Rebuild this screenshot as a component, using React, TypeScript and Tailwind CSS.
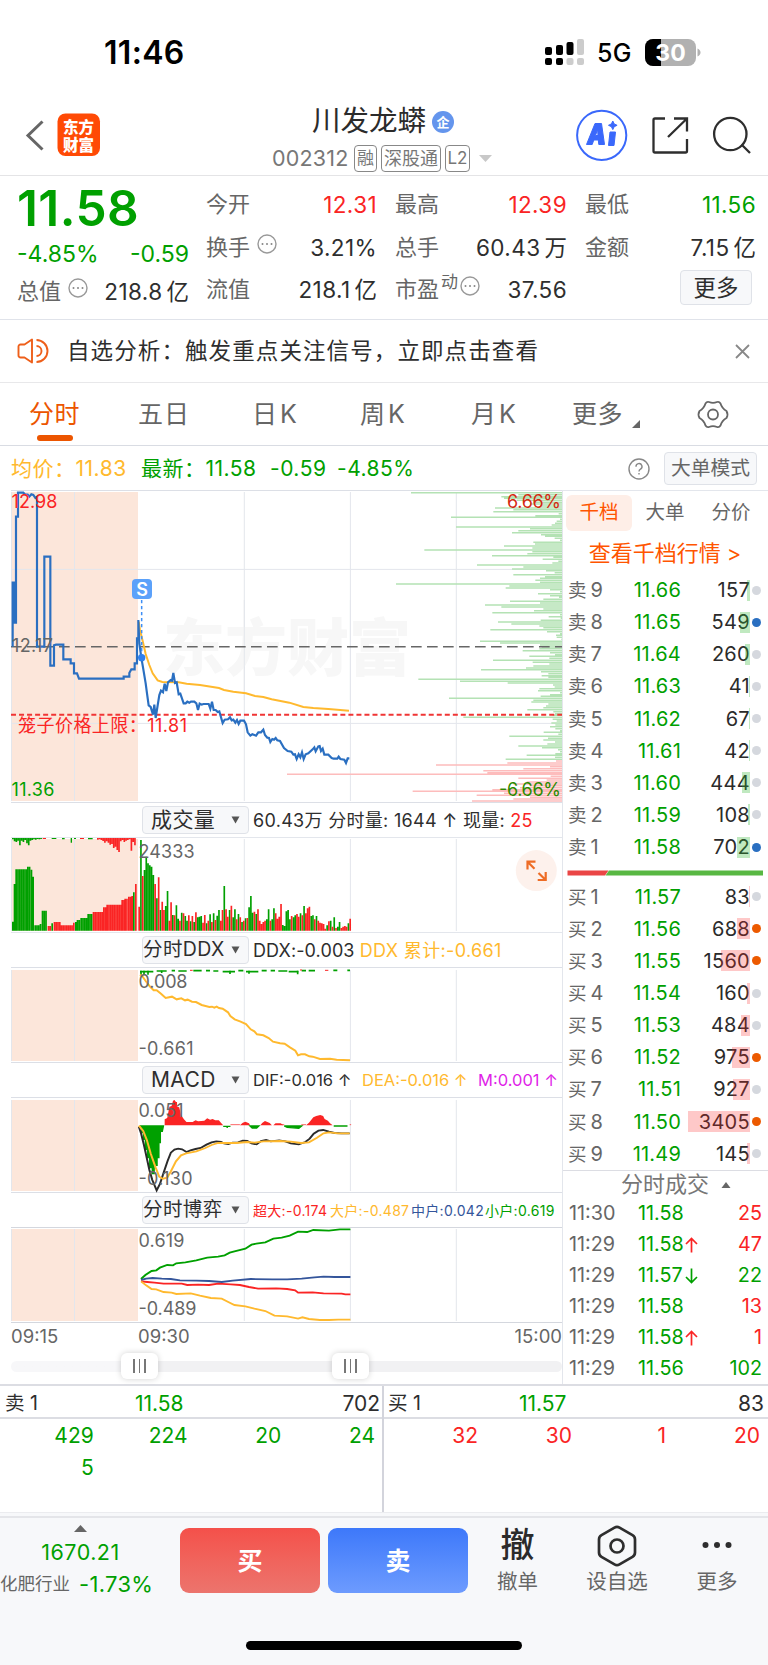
import type { ReactNode } from "react";

const GREEN = "#00a000";
const RED = "#fa2424";
const YELLOW = "#ffb92e";
const BLUE = "#2a6fc1";
const GRID = "#e3e6ec";

const tabs = [
  { label: "五日", width: "w-[114px] tracking-[1px]" },
  { label: "日K", width: "w-[108px] tracking-[3px]" },
  { label: "周K", width: "w-[111px] tracking-[3px]" },
  { label: "月K", width: "w-[101px] tracking-[3px]" },
];

const asks = [
  { name: "9", price: "11.66", qty: 157, bar: 3, dot: "bg-[#d5d8de]" },
  { name: "8", price: "11.65", qty: 549, bar: 10, dot: "bg-[#2a6fc1]" },
  { name: "7", price: "11.64", qty: 260, bar: 5, dot: "bg-[#d5d8de]" },
  { name: "6", price: "11.63", qty: 41, bar: 1, dot: "bg-[#d5d8de]" },
  { name: "5", price: "11.62", qty: 67, bar: 1, dot: "bg-[#d5d8de]" },
  { name: "4", price: "11.61", qty: 42, bar: 1, dot: "bg-[#d5d8de]" },
  { name: "3", price: "11.60", qty: 444, bar: 8, dot: "bg-[#d5d8de]" },
  { name: "2", price: "11.59", qty: 108, bar: 2, dot: "bg-[#d5d8de]" },
  { name: "1", price: "11.58", qty: 702, bar: 13, dot: "bg-[#2a6fc1]" },
];

const bids = [
  { name: "1", price: "11.57", qty: 83, bar: 1, dot: "bg-[#d5d8de]" },
  { name: "2", price: "11.56", qty: 688, bar: 13, dot: "bg-[#ec5a00]" },
  { name: "3", price: "11.55", qty: 1560, bar: 29, dot: "bg-[#ec5a00]" },
  { name: "4", price: "11.54", qty: 160, bar: 3, dot: "bg-[#d5d8de]" },
  { name: "5", price: "11.53", qty: 484, bar: 9, dot: "bg-[#d5d8de]" },
  { name: "6", price: "11.52", qty: 975, bar: 18, dot: "bg-[#ec5a00]" },
  { name: "7", price: "11.51", qty: 927, bar: 17, dot: "bg-[#d5d8de]" },
  { name: "8", price: "11.50", qty: 3405, bar: 62, dot: "bg-[#ec5a00]" },
  { name: "9", price: "11.49", qty: 145, bar: 3, dot: "bg-[#d5d8de]" },
];

const trades = [
  { time: "11:30", price: "11.58", arrow: "", qty: "25", up: true },
  { time: "11:29", price: "11.58", arrow: "up", qty: "47", up: true },
  { time: "11:29", price: "11.57", arrow: "down", qty: "22", up: false },
  { time: "11:29", price: "11.58", arrow: "", qty: "13", up: true },
  { time: "11:29", price: "11.58", arrow: "up", qty: "1", up: true },
  { time: "11:29", price: "11.56", arrow: "", qty: "102", up: false },
];

// order depth, [y, left edge] in thirds of a pixel
const askDepth = [
  [338, 333], [344, 655], [350, 604], [355, 612], [361, 650], [367, 700], [372, 690], [378, 720], [384, 585], [389, 640],
  [395, 580], [401, 776], [407, 706], [412, 453], [418, 780], [424, 770], [430, 765], [435, 755], [441, 468], [446, 690],
  [452, 655], [458, 636], [464, 723], [469, 735], [475, 764], [481, 780], [487, 700], [492, 705], [498, 612], [504, 697],
  [510, 373], [515, 697], [521, 682], [527, 576], [532, 760], [538, 728], [544, 775], [549, 757], [555, 531], [561, 670],
  [567, 636], [572, 738], [578, 764], [584, 640], [590, 735], [595, 720], [601, 706], [607, 720], [612, 288], [618, 628],
  [624, 617], [629, 750], [635, 780], [641, 714], [647, 750], [652, 777], [658, 730], [664, 630], [669, 720], [675, 555],
  [681, 604], [687, 730], [692, 702], [698, 577], [704, 780], [710, 746], [715, 782], [721, 722], [726, 594], [732, 634],
  [738, 718], [743, 730], [749, 571], [755, 741], [761, 780], [766, 768], [772, 770], [778, 784], [784, 540], [789, 600],
  [795, 720], [801, 725], [806, 718], [812, 668], [818, 750], [824, 765], [829, 688], [835, 748], [841, 579], [847, 698],
  [852, 748], [858, 700], [864, 678], [869, 543], [875, 723], [881, 745], [887, 725], [892, 745], [898, 355], [904, 480],
  [909, 623], [915, 759], [921, 764], [926, 718], [932, 714], [938, 780], [944, 750], [949, 722], [955, 447], [961, 700],
  [966, 694], [972, 745], [978, 738], [983, 730], [989, 682], [995, 760], [1001, 765], [1006, 758], [1012, 490], [1018, 758],
  [1023, 770], [1029, 754], [1035, 766], [1040, 750], [1046, 766], [1052, 780], [1057, 731], [1063, 775], [1069, 628], [1075, 744],
  [1080, 730], [1086, 765], [1092, 742], [1098, 655], [1103, 726], [1109, 774], [1115, 780], [1121, 766], [1126, 680], [1132, 765],
  [1138, 617],
];
const bidDepth = [
  [1143, 768], [1149, 622], [1155, 408], [1160, 750], [1166, 670], [1172, 550], [1178, 562], [1183, -39], [1189, 752], [1195, 655],
  [1200, 740], [1206, 680], [1212, 640], [1217, 690], [1223, 660], [1229, 577], [1234, 338], [1240, 612], [1246, 530], [1252, 690],
  [1257, 640], [1263, 516],
];

// volume bars, [top, is up], one for each minute from the open
const volume: [number, number][] = [
  [320, 1], [120, 0], [228, 1], [210, 0], [170, 0], [190, 0], [196, 0], [200, 0], [225, 0], [252, 1],
  [295, 0], [232, 1], [330, 0], [305, 1], [330, 1], [318, 0], [273, 0], [362, 1], [307, 1], [345, 0],
  [346, 1], [316, 0], [356, 0], [362, 1], [338, 0], [340, 1], [348, 0], [362, 0], [346, 1], [364, 0],
  [348, 1], [366, 0], [337, 1], [352, 0], [350, 0], [348, 0], [368, 1], [345, 1], [370, 0], [362, 1],
  [343, 0], [366, 1], [340, 0], [360, 1], [347, 0], [330, 0], [362, 1], [330, 1], [258, 0], [328, 1],
  [350, 1], [330, 0], [317, 1], [352, 0], [328, 0], [358, 1], [342, 0], [352, 1], [366, 0], [362, 1],
  [355, 0], [354, 1], [322, 0], [288, 0], [338, 0], [335, 1], [342, 0], [328, 1], [362, 1], [372, 1],
  [366, 1], [362, 1], [358, 0], [328, 0], [362, 1], [358, 0], [325, 0], [340, 1], [356, 1], [350, 1],
  [312, 1], [375, 0], [378, 0], [334, 0], [330, 0], [358, 0], [348, 1], [352, 0], [346, 0], [342, 1],
  [350, 1], [340, 0], [346, 1], [318, 0], [340, 1], [325, 1], [320, 1], [348, 0], [346, 0], [358, 1],
  [348, 0], [362, 1], [368, 1], [370, 1], [372, 1], [386, 1], [376, 0], [364, 1], [362, 0], [380, 1],
  [352, 0], [384, 1], [380, 0], [366, 0], [384, 1], [380, 1], [378, 1], [380, 1], [370, 0], [356, 1],
];

// auction bars, [first x, last x, top, is up]
const auction = [
  [36, 36, 365, 0], [41, 41, 252, 0], [46, 79, 208, 0], [81, 88, 200, 0], [92, 92, 209, 0], [97, 97, 230, 0],
  [103, 114, 376, 0], [119, 119, 372, 0], [125, 138, 332, 0], [143, 150, 378, 1], [154, 156, 370, 0], [161, 178, 366, 1],
  [182, 214, 376, 1], [219, 219, 368, 1], [225, 225, 366, 0], [230, 236, 360, 0], [241, 258, 354, 0], [262, 274, 342, 0],
  [278, 304, 336, 1], [309, 314, 322, 1], [319, 360, 314, 1], [364, 368, 300, 1], [373, 379, 296, 1], [384, 390, 290, 1],
  [394, 394, 288, 1], [399, 399, 277, 0], [405, 405, 252, 1],
];
const unmatchedGreen = [4, 10, 12, 8, 22, 8, 12, 6, 16, 22, 8, 6, 4, 5, 3, 4, 3];
const unmatchedRed = [5, 4, 6, 9, 14, 10, 14, 20, 18, 30, 26, 36, 42, 10, 6, 12, 8, 6, 4, 38, 12, 22];

const bars = (list: { x: number; y: number; h: number; w?: number }[]) =>
  list.map(({ x, y, h, w = 5 }) => `M${x} ${y}h${w}v${h}h-${w}z`).join("");

const auctionPath = (up: number) =>
  auction
    .filter((a) => a[3] === up)
    .map(([from, to, top], i, all) => {
      const list = [];
      const end = all[i][1] > from ? to + 2 : to;
      for (let x = from; x <= end; x += 5.3) list.push({ x, y: top, h: 392 - top });
      return bars(list);
    })
    .join("");

const volumePath = (up: number) =>
  bars(
    volume
      .map(([top, isUp], i) => ({ x: 415 + i * 5.32, y: top, h: 392 - top, isUp }))
      .filter((b) => b.isUp === up),
  );

function Frame({ y, height, children }: { y: number; height: number; children: ReactNode }) {
  return (
    <svg
      className="block shrink-0 font-[Inter]"
      width={552}
      height={height}
      viewBox={`11 ${y} 552 ${height}`}
    >
      {children}
    </svg>
  );
}

function Grid({ top, bottom }: { top: number; bottom: number }) {
  return (
    <>
      <rect x={11.5} y={top} width={126.5} height={bottom - top} fill="#fce6da" />
      <path
        d={`M11.5 ${top}V${bottom}M74.5 ${top}V${bottom}M244.3 ${top}V${bottom}M350.4 ${top}V${bottom}M456.3 ${top}V${bottom}`}
        stroke={GRID}
        fill="none"
      />
    </>
  );
}

function PriceChart() {
  const depth = (rows: number[][]) =>
    rows.map(([y, x]) => `M${x + 900} ${y}H1688`).join("");
  return (
    <Frame y={490} height={313}>
      <path d="M11 490.5H562M11 802.5H562" stroke="#dcdfe6" />
      <Grid top={492} bottom={801} />
      <path d="M11 569.4H562M11 723.4H562" stroke={GRID} />
      <text
        x={163}
        y={671}
        fontSize={62}
        fontWeight={900}
        fill="#f7f7f7"
        textLength={248}
        fontFamily="Noto Sans CJK SC"
      >
        东方财富
      </text>
      <path d="M244.3 600V700M350.4 600V700" stroke={GRID} />
      <g transform="translate(0 380) scale(.33333)" fill="none">
        <path d={depth(askDepth)} stroke="#b4e2b4" strokeWidth={4.3} />
        <path d={depth(bidDepth)} stroke="#fdbcbc" strokeWidth={4.3} />
        <path d="M33 800H1688" stroke="#666" strokeWidth={4.5} strokeDasharray="32 16" />
        <path d="M33 1004.5H1688" stroke="#f03535" strokeWidth={6} strokeDasharray="15 9.1" />
        <path
          d="M416 725L420 750L428 783L437 822L448 855L458 880L473 901L487 906L536 907L560 911L600 915L657 924L672 930L700 935L738 940L765 948L790 951L815 958L868 968L910 981L940 984L985 987L1047 992"
          stroke={YELLOW}
          strokeWidth={6}
        />
        <path
          d="M38 800V608H44V728H48V410H54V338H70L76 344H83L88 350L94 343L100 345L106 354L111 350V800H133V530H151V857H162V796L168 794H190V838H212V850H222V880H231L237 896H371V890H388V879L394 868H404V850H411V775H415V720L418 790L424 833L430 868L437 910L441 940L446 976L452 981L459 1004L463 974L467 1014L473 976L478 945L483 932L489 937L494 911L499 933L504 907L512 900L516 902L520 879L525 909L530 907L536 943L541 941L551 970L557 970L562 965L568 968L573 965H583L589 970L594 990L599 971L605 974L610 972H626L631 986L636 965L641 990L647 990L653 996L658 994L668 1029L674 1019L684 1018L690 1012L695 1021L700 1019L706 1028L711 1020L716 1032L721 1022H732L738 1033L743 1057L751 1067L757 1063L768 1067L775 1057L783 1057L790 1049L795 1065L802 1073L807 1074L811 1086L817 1077L822 1079L827 1074L832 1081L840 1083L852 1104L863 1113L874 1115L880 1124L885 1123L890 1137L896 1123L901 1132L906 1117L911 1137L917 1123L925 1120L938 1108L943 1102L947 1114L955 1099L959 1098L963 1113L968 1106L973 1124H985L995 1134L1001 1136H1012L1016 1130L1021 1137L1033 1139L1038 1149L1043 1135H1048"
          stroke={BLUE}
          strokeWidth={6.5}
        />
        <path d="M425 660V825" stroke="#3d8ef5" strokeWidth={4.5} strokeDasharray="10 8" />
        <circle cx={425} cy={833} r={11} fill="#2f80ed" />
      </g>
      <rect x={132} y={579} width={20} height={20} rx={4} fill="#5ba1fa" />
      <g fontSize={18}>
        <text x={142} y={595.5} fill="#fff" fontWeight={600} textAnchor="middle">S</text>
        <text x={11.5} y={508} fill={RED} textLength={46}>12.98</text>
        <text x={12} y={652} fill="#666" textLength={41}>12.17</text>
        <text x={11.5} y={796} fill={GREEN} textLength={43}>11.36</text>
        <text x={507} y={508} fill="#d42a12" textLength={54}>6.66%</text>
        <text x={499} y={796} fill="#2b8a00" textLength={62}>-6.66%</text>
        <text x={18} y={732} fill={RED} textLength={169} fontFamily="Inter, Noto Sans CJK SC">
          笼子价格上限：11.81
        </text>
      </g>
      <path d="M562.5 490V803" stroke="#e3e6ec" />
    </Frame>
  );
}

function VolumeChart() {
  return (
    <Frame y={837} height={96}>
      <path d="M11 837.5H562M11 932.5H562" stroke={GRID} />
      <Grid top={839} bottom={931} />
      <g transform="translate(0 800) scale(.33333)">
        <path d={auctionPath(0) + volumePath(0)} fill={GREEN} />
        <path d={auctionPath(1) + volumePath(1)} fill={RED} />
        <path d={bars(unmatchedGreen.map((h, i) => ({ x: 36 + i * 5.3, y: 114, h })))} fill={GREEN} />
        <path d={bars(unmatchedRed.map((h, i) => ({ x: 291 + i * 5.3, y: 114, h })))} fill={RED} />
        <path d="M155 114h14v3h-14zM186 114h8v4h-8zM212 114h4v14h-4zM222 114h6v3h-6zM264 114h14v4h-14z" fill={GREEN} />
        <path d="M128 114h10v3h-10zM240 114h12v3h-12z" fill={RED} />
      </g>
      <text x={138.5} y={857.5} fontSize={18} fill="#666" textLength={56}>24333</text>
      <circle cx={536.3} cy={870.6} r={20.5} fill="#fdf1ec" />
      <path
        d="M527.5 869.5V861.7H535.5M527.5 861.7L534.5 868.7M537.7 880H545.7V872M545.7 880L538.5 873"
        stroke="#ee6c25"
        strokeWidth={2.2}
        fill="none"
      />
      <path d="M562.5 837V933" stroke="#e3e6ec" />
    </Frame>
  );
}

function DdxChart() {
  return (
    <Frame y={967} height={96}>
      <path d="M11 967.5H562M11 1062.5H562" stroke="#dcdfe6" />
      <Grid top={970} bottom={1061} />
      <g transform="translate(0 800) scale(.33333)" fill="none">
        <path
          d="M420 515H460M470 513H500M515 512H525M535 513H560M580 512H605M618 512H630M640 513H655M668 515H705M715 512H730M738 515H775M785 512H800M812 512H825M835 513H862M866 515H895M905 512H918M926 512H945M1000 511H1012M1042 511H1050"
          stroke={GREEN}
          strokeWidth={5}
        />
        <path d="M423 512V526M432 512V524M444 512V524M485 512V519M690 512V522M747 512V521M893 512V523" stroke={GREEN} strokeWidth={5} />
        <path d="M570 511H578M900 510H906M975 511H985" stroke={RED} strokeWidth={3} />
        <path
          d="M420 524L428 530L437 543L450 560L461 571L470 571L483 581L497 594L516 590L530 598L544 595L555 601L563 599L576 605L588 606L605 615L628 621L636 620L643 623L650 620L657 624L668 626L684 637L691 648L704 658L720 664L738 672L752 688L763 694L771 703L790 706L806 714L819 725L840 730L854 731L870 742L886 752L894 766L903 763L915 763L928 769L938 770L960 777L990 776L1010 779L1050 781"
          stroke={YELLOW}
          strokeWidth={6}
        />
      </g>
      <g fontSize={18} fill="#666">
        <text x={138.5} y={987.5} textLength={49}>0.008</text>
        <text x={138.5} y={1055} textLength={55}>-0.661</text>
      </g>
      <path d="M562.5 967V1063" stroke="#e3e6ec" />
    </Frame>
  );
}

function MacdChart() {
  return (
    <Frame y={1097} height={96}>
      <path d="M11 1097.5H562M11 1192.5H562" stroke="#dcdfe6" />
      <Grid top={1100} bottom={1191} />
      <g transform="translate(0 1080) scale(.3635 .33333)">
        <path
          d="M384 136L452 136L448 156H443V190H439V235H434V258H426V283H417V265H410V235H404V210H398V180H393V160H388V145Z"
          fill={GREEN}
        />
        <path
          d="M453 136V118L460 114L466 80L472 78L476 62L480 60L484 66H487V80L493 82L498 105L506 118L513 126H530L538 121L545 124L562 122L570 115L578 119L585 117L592 121H602L609 130L614 136ZM660 136L668 128L675 125L685 130L688 136ZM716 136L722 128L729 123L742 129L748 136ZM752 136L758 130H772L780 136ZM842 136L850 128L856 120L862 112L870 108L881 105L889 108L893 117L902 122L908 130L915 136Z"
          fill={RED}
        />
        <path d="M614 139H634M625 141V144M688 138L694 144H706L712 138ZM782 138L790 142L822 145L830 138ZM918 138H956" stroke={GREEN} strokeWidth={4} fill={GREEN} />
        <path d="M634 134H660M775 134H782M829 134H842M962 134H966" stroke={RED} strokeWidth={2} />
        <g fill="none" strokeWidth={5.5}>
          <path
            d="M382 140L388 160L396 195L404 235L411 270L419 300L431 331L440 312L451 275L461 243L470 218L480 209L490 206L501 208L513 216L524 211L538 207L552 204L568 194L582 187L595 184L608 186L616 190L628 192L640 188L655 187L668 182L680 183L692 190L706 193L718 183L732 180L745 184L768 181L785 184L800 190L822 193L840 186L852 176L863 161L876 152L889 150L905 155L920 159L940 160H962"
            stroke="#2b2b2b"
          />
          <path
            d="M382 137L394 153L404 180L415 222L428 262L438 290L448 296L460 293L470 274L484 244L498 226L512 220L540 214L565 204L582 195L600 189L625 189L650 189L680 186L700 188L725 184L770 183L800 185L828 189L850 187L872 173L890 160L905 157L930 160L962 160"
            stroke={YELLOW}
          />
        </g>
      </g>
      <g fontSize={18} fill="#666">
        <text x={138.5} y={1117} textLength={45}>0.051</text>
        <text x={138.5} y={1185} textLength={54}>-0.130</text>
      </g>
      <path d="M562.5 1097V1193" stroke="#e3e6ec" />
    </Frame>
  );
}

function GameChart() {
  return (
    <Frame y={1227} height={96}>
      <path d="M11 1227.5H562M11 1322.5H562" stroke="#d4d7de" />
      <Grid top={1229} bottom={1321} />
      <g transform="translate(0 1080) scale(.3635 .33333)" fill="none" strokeWidth={5.5}>
        <path
          d="M388 597L400 585L417 573L430 571L440 563L460 555L476 556L485 550L510 547L540 541L570 533L600 530L618 526L632 518L645 514L675 506L692 494L705 491L730 487L752 476L775 473L797 467L820 455L845 456L862 450L905 452L935 448H964"
          stroke={GREEN}
        />
        <path d="M388 600L402 596L420 594L445 596L470 597L495 601L540 602L575 603L610 606L640 602L690 597L750 598L790 598L830 596L865 592L890 590L920 591H964" stroke="#34559b" />
        <path d="M388 604L405 606L425 608L450 611L500 611L515 615L545 614L575 615L600 611L635 613L660 615L685 621L710 626L760 625L790 627L812 631L820 638L860 637L890 640L940 641L950 643L964 643" stroke={RED} />
        <path d="M388 604L402 616L417 627L430 628L450 636L472 638L485 642L525 640L550 647L580 654L610 656L628 666L645 675L675 679L700 686L730 693L755 707L790 709L820 716L832 712L850 717L880 720H905L930 719H964" stroke={YELLOW} />
      </g>
      <g fontSize={18} fill="#666">
        <text x={138.5} y={1247} textLength={46}>0.619</text>
        <text x={138.5} y={1315} textLength={58}>-0.489</text>
      </g>
      <path d="M562.5 1227V1323" stroke="#e3e6ec" />
    </Frame>
  );
}

function Picker({ label, children, wide }: { label: string; children: ReactNode; wide?: boolean }) {
  return (
    <div className="flex h-[34px] w-[552px] shrink-0 items-center border-r border-[#e3e6ec] pl-[131px] whitespace-nowrap">
      <div className="flex h-[28px] w-[107px] shrink-0 items-center rounded border border-[#dfe2e8] bg-[#f7f8fa] text-[#2e2e2e]">
        <span className={wide ? "w-[88px] pl-[8px] text-[21px] tracking-[0.4px]" : "w-[88px] text-[19.5px] tracking-[0.4px]"}>
          {label}
        </span>
        <svg width={9} height={8} viewBox="0 0 9 8" className="block">
          <path d="M.5 .5h8L4.5 7.5z" fill="#555" />
        </svg>
      </div>
      <div className="ml-1 flex flex-1 text-[#2e2e2e]">{children}</div>
    </div>
  );
}

function More() {
  return (
    <svg width={20} height={20} viewBox="0 0 20 20" className="block shrink-0">
      <circle cx={10} cy={10} r={9} fill="none" stroke="#999" strokeWidth={1.4} />
      <path d="M5.5 10h.01M10 10h.01M14.5 10h.01" stroke="#888" strokeWidth={2} strokeLinecap="round" />
    </svg>
  );
}

function Cell({
  label,
  extra,
  value,
  unit,
  color = "text-[#2e2e2e]",
}: {
  label: string;
  extra?: ReactNode;
  value: string;
  unit?: string;
  color?: string;
}) {
  return (
    <div className="flex h-[43px] items-center justify-between">
      <span className="flex items-center text-[22px] text-[#666]">
        {label}
        {extra}
      </span>
      <span className={`${color} text-[22.5px] tracking-[0.4px]`}>
        {value}
        {unit && <span className="ml-[4px] tracking-normal">{unit}</span>}
      </span>
    </div>
  );
}

function BookRow({ side, row }: { side: string; row: (typeof asks)[number] }) {
  const sell = side === "卖";
  return (
    <div className="flex h-[32.13px] items-center pl-[5px] text-[20px]">
      <span className="w-[49px] text-[#666]">
        <span className="mr-[4px] text-[18.5px]">{side}</span>
        {row.name}
      </span>
      <span className="w-[64px] text-right tracking-[0.2px] text-[#00a000]">{row.price}</span>
      <span className="relative flex h-[21px] w-[69px] items-center justify-end tracking-[0.3px] text-[#2b2b2b]">
        {row.qty}
        <i
          className={sell ? "absolute top-0 right-0 h-full bg-[#2fb52f]/30" : "absolute top-0 right-0 h-full bg-[#fa2424]/25"}
          style={{ width: row.bar }}
        />
      </span>
      <i className={`ml-[2px] h-[9px] w-[9px] rounded-full ${row.dot}`} />
    </div>
  );
}

function Handle({ className }: { className: string }) {
  return (
    <div className={`absolute top-[8px] flex h-[26px] w-[37px] items-center justify-center gap-[4px] rounded-md bg-white shadow-[0_0_6px_rgba(0,0,0,0.18)] ${className}`}>
      <i className="h-[14px] w-[1.5px] bg-[#777]" />
      <i className="h-[14px] w-[1.5px] bg-[#777]" />
      <i className="h-[14px] w-[1.5px] bg-[#777]" />
    </div>
  );
}

function StatusBar() {
  return (
    <div className="flex h-[104px] items-center pl-[104px]">
      <span className="w-[440px] pt-[2px] text-[32px] font-semibold tracking-[0.3px] text-black">11:46</span>
      <svg width={41} height={28} viewBox="0 0 41 28">
        <g fill="#000">
          <rect x={1} y={9} width={7} height={8} rx={2} />
          <rect x={12} y={7} width={7} height={10} rx={2} />
          <rect x={22.5} y={4} width={7} height={13} rx={2} />
          <rect x={1} y={20} width={7} height={7} rx={2} />
          <rect x={12} y={20} width={7} height={7} rx={2} />
        </g>
        <g fill="#ccc">
          <rect x={33} y={1} width={7} height={16} rx={2} />
          <rect x={22.5} y={20} width={7} height={7} rx={2} />
          <rect x={33} y={20} width={7} height={7} rx={2} />
        </g>
      </svg>
      <span className="ml-[12px] w-[48px] pt-[4px] text-[25px] font-medium tracking-[0.2px] text-black">5G</span>
      <svg width={56} height={27} viewBox="0 0 56 27" className="font-[Inter]">
        <rect x={0} y={0} width={51} height={27} rx={8} fill="#b1b1b1" />
        <path d="M16 0H8a8 8 0 0 0-8 8v11a8 8 0 0 0 8 8h8z" fill="#000" />
        <path d="M52.5 9.5c4 1.5 4 6.5 0 8z" fill="#b1b1b1" />
        <text x={25.5} y={22} fill="#fff" fontSize={23} fontWeight={700} textAnchor="middle">30</text>
      </svg>
    </div>
  );
}

function Header() {
  return (
    <div className="flex h-[72px] border-b border-[#e4e4e6]">
      <svg width={102} height={60} viewBox="0 104 102 60">
        <path d="M42.5 121.5L28 135.5L42.5 149.5" stroke="#666" strokeWidth={3} fill="none" />
        <rect x={57.5} y={113.5} width={42.5} height={42.5} rx={8} fill="#ff4a05" />
        <g fill="#fff" fontSize={15.5} fontWeight={900} fontFamily="Noto Sans CJK SC">
          <text x={63} y={132.5}>东方</text>
          <text x={63} y={150.5}>财富</text>
        </g>
      </svg>
      <div className="w-[474px]">
        <div className="mt-[2px] flex h-[31px] items-center pl-[210px]">
          <span className="text-[28.5px] text-[#2b2b2b]">川发龙蟒</span>
          <svg width={22} height={22} viewBox="0 0 22 22" className="ml-[6px] font-bold">
            <circle cx={11} cy={11} r={11} fill="#6495ed" />
            <text x={11} y={15.5} fill="#fff" fontSize={13} textAnchor="middle">企</text>
          </svg>
        </div>
        <div className="mt-[8px] flex h-[27px] items-center gap-[4px] pl-[170px] text-[#777]">
          <span className="mr-[4px] w-[74px] text-[21.5px] tracking-[0.2px]">002312</span>
          <span className="h-[27px] w-[23px] rounded border border-[#888] text-center text-[17px] leading-[25px]">融</span>
          <span className="h-[27px] w-[60px] rounded border border-[#888] text-center text-[18px] leading-[25px]">深股通</span>
          <span className="h-[27px] w-[25px] rounded border border-[#888] text-center text-[17px] leading-[25px]">L2</span>
          <svg width={13} height={7} viewBox="0 0 13 7" className="ml-[5px]">
            <path d="M0 0h13L6.5 7z" fill="#c8c8c8" />
          </svg>
        </div>
      </div>
      <svg width={192} height={62} viewBox="576 104 192 62" fill="none">
        <circle cx={601.7} cy={135.3} r={24.6} stroke="#3a68fb" strokeWidth={2} />
        <path d="M586.5 144.5L595 123.5H601.5L604.5 144.5H598.8L598.3 140H593.8L592.2 144.5Z M595.5 135.5H598L597.6 129.5Z" fill="#3a68fb" stroke="#3a68fb" strokeLinejoin="round" fillRule="evenodd" />
        <path d="M610 132H615.5L614 145.500H608.500Z" fill="#3a68fb" stroke="#3a68fb" strokeLinejoin="round" />
        <path d="M612.8 121l1.4 2.900 2.900 1.400-2.900 1.400-1.400 2.900-1.400-2.900-2.900-1.400 2.900-1.400z" fill="#3a68fb" stroke="#3a68fb" strokeLinejoin="round" />
        <g stroke="#2e2e2e" strokeWidth={2.3}>
          <path d="M665 118.5H655a1.500 1.500 0 0 0-1.500 1.500V151a1.500 1.500 0 0 0 1.500 1.500H685.5a1.500 1.500 0 0 0 1.500-1.500V139" />
          <path d="M674 118.5H687V131.5M687 118.5L668 137" />
          <circle cx={730.3} cy={134} r={16.2} />
          <path d="M741.5 144.5L750 153" />
        </g>
      </svg>
    </div>
  );
}

function Quote() {
  return (
    <div className="flex h-[144px] border-b border-[#e0e3ea] pl-[17px]">
      <div className="w-[172px]">
        <div className="mt-[7px] h-[50px] text-[49.5px] leading-[50px] font-semibold tracking-[0.4px] text-[#00a000]">11.58</div>
        <div className="flex h-[42px] items-center justify-between text-[23px] text-[#00a000]">
          <span>-4.85%</span>
          <span>-0.59</span>
        </div>
        <div className="-mt-[5px]">
          <Cell label="总值" extra={<span className="mb-[8px] ml-[7px]"><More /></span>} value="218.8" unit="亿" />
        </div>
      </div>
      <div className="mt-[7px] ml-[17px] w-[171px]">
        <Cell label="今开" value="12.31" color="text-[#fa2424]" />
        <Cell label="换手" extra={<span className="mb-[8px] ml-[7px]"><More /></span>} value="3.21%" />
        <div className="-mt-px">
          <Cell label="流值" value="218.1" unit="亿" />
        </div>
      </div>
      <div className="mt-[7px] ml-[18px] w-[172px]">
        <Cell label="最高" value="12.39" color="text-[#fa2424]" />
        <Cell label="总手" value="60.43" unit="万" />
        <div className="-mt-px">
          <Cell
            label="市盈"
            extra={
              <span className="mb-[8px] ml-[2px] flex items-center gap-[2px] text-[17px]">
                <span className="-mt-[6px]">动</span>
                <More />
              </span>
            }
            value="37.56"
          />
        </div>
      </div>
      <div className="mt-[7px] ml-[18px] w-[171px]">
        <Cell label="最低" value="11.56" color="text-[#00a000]" />
        <Cell label="金额" value="7.15" unit="亿" />
        <div className="mt-px ml-[95px] flex h-[35px] w-[72px] items-center justify-center rounded border border-[#dfe2e8] bg-[#f7f8fa] text-[22.5px] text-[#2e2e2e]">
          更多
        </div>
      </div>
    </div>
  );
}

function Notice() {
  return (
    <div className="flex h-[63px] items-center border-b border-[#e8e8ea] pl-[17px]">
      <svg width={32} height={26} viewBox="0 0 32 26" fill="none" stroke="#ee5f1a" strokeWidth={1.9}>
        <path d="M15 1.5V24.5L7.5 19.5H3.5A2 2 0 0 1 1.5 17.5V8.5A2 2 0 0 1 3.5 6.5H7.5Z" strokeLinejoin="round" />
        <path d="M19.5 8a5 5 0 0 1 0 10M19.5 2a11 11 0 0 1 0 22" />
      </svg>
      <span className="ml-[18px] w-[668px] text-[22.5px] tracking-[1.1px] text-[#2e2e2e]">
        自选分析：触发重点关注信号，立即点击查看
      </span>
      <svg width={15} height={15} viewBox="0 0 15 15">
        <path d="M1 1l13 13M14 1L1 14" stroke="#888" strokeWidth={1.8} />
      </svg>
    </div>
  );
}

function Tabs() {
  return (
    <div className="flex h-[63px] border-b border-[#d9dce3] pl-[29px] text-[25px] leading-[62px] whitespace-nowrap text-[#666]">
      <div className="flex w-[109px] flex-col">
        <span className="h-[52px] tracking-[0.6px] text-[#ec5500]">分时</span>
        <i className="ml-[8px] h-[6px] w-[36px] rounded-full bg-[#ec5500]" />
      </div>
      {tabs.map((tab) => (
        <span key={tab.label} className={tab.width}>
          {tab.label}
        </span>
      ))}
      <span className="w-[54px] tracking-[0.6px]">更多</span>
      <svg width={140} height={62} viewBox="626 383 140 62" fill="none" stroke="#666" strokeWidth={1.8} strokeLinejoin="round">
        <path d="M640 420v8h-8z" fill="#666" stroke="none" />
        <path d="M705.5 403.500Q706.800 401.300 709 402Q713 403.600 717 402Q719.200 401.300 720.500 403.500Q722 408.500 726.500 411Q728.500 414.500 726.500 418Q722 420.500 720.500 425.500Q719.200 427.700 717 427Q713 425.400 709 427Q706.800 427.700 705.500 425.500Q704 420.500 699.500 418Q697.500 414.500 699.500 411Q704 408.500 705.500 403.500Z" />
        <circle cx={713} cy={414.5} r={5} />
      </svg>
    </div>
  );
}

function BottomBook() {
  return (
    <div className="flex h-[128px] border-t-2 border-[#dcdde3] text-[21px]">
      <div className="w-[384px] border-r-2 border-[#d3d4dc]">
        <div className="flex h-[33px] items-center border-b-2 border-[#dcdde3] pt-[4px] pr-[2px] pl-[5px] text-[#2e2e2e]">
          <span className="w-[130px] text-[19.5px]">卖 1</span>
          <span className="flex-1 text-[#00a000]">11.58</span>
          <span>702</span>
        </div>
        <div className="grid grid-cols-4 pt-px pr-[7px] text-right leading-[32px] text-[#00a000]">
          <span>429</span>
          <span>224</span>
          <span>20</span>
          <span>24</span>
          <span>5</span>
        </div>
      </div>
      <div className="flex-1">
        <div className="flex h-[33px] items-center border-b-2 border-[#dcdde3] pt-[4px] pr-[4px] pl-[4px] text-[#2e2e2e]">
          <span className="w-[131px] text-[19.5px]">买 1</span>
          <span className="flex-1 text-[#00a000]">11.57</span>
          <span>83</span>
        </div>
        <div className="grid grid-cols-4 pt-px pr-[8px] text-right leading-[32px] text-[#fa2424]">
          <span>32</span>
          <span>30</span>
          <span>1</span>
          <span>20</span>
        </div>
      </div>
    </div>
  );
}

function ActionBar() {
  return (
    <div className="h-[153px] border-t border-[#ebecef] bg-[#f7f8fa] pt-[3px]">
      <div className="flex h-[111px] border-t-2 border-[#e4e5e9] pt-[7px]">
        <div className="flex w-[180px] flex-col whitespace-nowrap">
          <svg width={13} height={7} viewBox="0 0 13 7" className="ml-[74px]">
            <path d="M6.5 0L13 7H0z" fill="#666" />
          </svg>
          <span className="mt-[4px] w-[161px] text-center text-[21.5px] leading-[32px] tracking-[0.5px] text-[#00a000]">1670.21</span>
          <span className="flex items-center text-[22px] leading-[32px] tracking-[0.3px] text-[#00a000]">
            <span className="w-[79px] text-[17.5px] tracking-normal text-[#666]">化肥行业</span>
            -1.73%
          </span>
        </div>
        <div className="mt-[3px] flex h-[65px] w-[140px] items-center justify-center rounded-[9px] bg-linear-to-b from-[#f4504a] to-[#ec746d] pt-[2px] text-[25px] font-bold text-white">
          买
        </div>
        <div className="mt-[3px] ml-[8px] flex h-[65px] w-[140px] items-center justify-center rounded-[9px] bg-linear-to-b from-[#3d78fa] to-[#6d9bfe] pt-[2px] text-[25px] font-bold text-white">
          卖
        </div>
        <div className="ml-[9px] flex w-[81px] flex-col items-center text-[20.5px] text-[#666]">
          <span className="text-[34px] leading-[40px] font-medium text-[#2b2b2b]">撤</span>
          <span className="leading-[34px]">撤单</span>
        </div>
        <div className="ml-[17px] flex w-[84px] flex-col items-center text-[20.5px] text-[#666]">
          <svg width={40} height={42} viewBox="0 0 40 42" fill="none" stroke="#2e2e2e" strokeWidth={2.7}>
            <path d="M17.5 2.7a5 5 0 0 1 5 0L35.5 10.2a5 5 0 0 1 2.5 4.300V27.5a5 5 0 0 1-2.5 4.300L22.5 39.3a5 5 0 0 1-5 0L4.5 31.800A5 5 0 0 1 2 27.500V14.500a5 5 0 0 1 2.500-4.300z" />
            <circle cx={20} cy={21} r={6.5} />
          </svg>
          <span className="-mt-[2px] leading-[34px]">设自选</span>
        </div>
        <div className="ml-[16px] flex w-[84px] flex-col items-center text-[20.5px] text-[#666]">
          <svg width={40} height={40} viewBox="0 0 40 40" fill="#2e2e2e">
            <circle cx={8.5} cy={20} r={3} />
            <circle cx={20} cy={20} r={3} />
            <circle cx={31.5} cy={20} r={3} />
          </svg>
          <span className="leading-[34px]">更多</span>
        </div>
      </div>
      <div className="mx-auto mt-[14px] h-[9px] w-[276px] rounded-full bg-black" />
    </div>
  );
}

export default function App() {
  return (
    <div className="h-[1665px] w-[768px] overflow-hidden bg-white font-[Inter,'Noto_Sans_CJK_SC',sans-serif]">
      <StatusBar />
      <Header />
      <Quote />
      <Notice />
      <Tabs />
      <div className="flex h-[44px] items-center pt-px pl-[11px] text-[21px] tracking-[0.5px] text-[#00a000]">
        <span className="w-[130px] text-[#ffb92e]">均价：11.83</span>
        <span className="w-[129px]">最新：11.58</span>
        <span className="w-[67px]">-0.59</span>
        <span>-4.85%</span>
        <svg width={22} height={22} viewBox="0 0 22 22" className="mr-[14px] ml-auto" fill="none" stroke="#888" strokeWidth={1.4}>
          <circle cx={11} cy={11} r={10} />
          <path d="M8 8.700a3 3 0 1 1 4.500 2.500c-1 .6-1.500 1-1.500 2.300M11 15v1.600" />
        </svg>
        <span className="mr-[11px] flex h-[33px] w-[93px] items-center justify-center rounded border border-[#dfe2e8] bg-[#f7f8fa] text-[19.8px] tracking-normal text-[#666]">
          大单模式
        </span>
      </div>
      <div className="flex h-[894px]">
        <div className="flex w-[563px] flex-col pl-[11px]">
          <PriceChart />
          <Picker label="成交量" wide>
            <span className="text-[18px] tracking-[0.3px]">
              60.43万 分时量: 1644 ↑ 现量: <span className="text-[#fa2424]">25</span>
            </span>
          </Picker>
          <VolumeChart />
          <Picker label="分时DDX">
            <span className="text-[18px] tracking-[0.1px]">
              DDX:-0.003 <span className="tracking-[0.35px] text-[#ffb92e]">DDX 累计:-0.661</span>
            </span>
          </Picker>
          <DdxChart />
          <Picker label="MACD" wide>
            <span className="w-[109px] text-[16.5px]">DIF:-0.016 ↑</span>
            <span className="w-[116px] text-[16.5px] text-[#ffb92e]">DEA:-0.016 ↑</span>
            <span className="text-[16.5px] text-[#e01fe8]">M:0.001 ↑</span>
          </Picker>
          <MacdChart />
          <Picker label="分时博弈">
            <span className="w-[77px] text-[14px] tracking-[0.3px] text-[#fa2424]">超大:-0.174</span>
            <span className="w-[81px] text-[14px] tracking-[0.3px] text-[#ffb92e]">大户:-0.487</span>
            <span className="w-[74px] text-[14px] tracking-[0.3px] text-[#34559b]">中户:0.042</span>
            <span className="text-[14px] tracking-[0.3px] text-[#00a000]">小户:0.619</span>
          </Picker>
          <GameChart />
          <div className="flex h-[22px] shrink-0 items-end border-r border-[#e3e6ec] text-[18.5px] leading-[18px] text-[#666]">
            <span className="w-[127px]">09:15</span>
            <span className="flex-1">09:30</span>
            <span>15:00</span>
          </div>
          <div className="relative h-[39px] shrink-0 border-r border-[#e3e6ec] pt-[16px]">
            <div className="h-[11px] rounded-full bg-linear-to-r from-[#f7f7f9] from-20% to-[#f1f1f3] to-20%" />
            <Handle className="left-[110px]" />
            <Handle className="left-[321px]" />
          </div>
        </div>
        <div className="w-[205px]">
          <div className="flex h-[44px] items-center border-t border-[#e3e6ec] pl-[3px] text-[19.5px] text-[#666]">
            <span className="flex h-[36px] w-[66px] items-center justify-center rounded-md bg-[#feeee7] text-[#ff5500]">千档</span>
            <span className="w-[66px] text-center">大单</span>
            <span className="w-[66px] text-center">分价</span>
          </div>
          <div className="h-[40px] pr-px text-center text-[22px] leading-[39px] whitespace-nowrap text-[#ff5500]">查看千档行情 &gt;</div>
          {asks.map((row) => (
            <BookRow key={row.name} side="卖" row={row} />
          ))}
          <svg width={205} height={17.5} viewBox="563 863 205 17.5" className="block">
            <path d="M567.5 870.5H608.5L605 875.5H567.5z" fill="#ea4545" />
            <path d="M609 870.5H763V875.5H605.5z" fill="#58b843" />
          </svg>
          {bids.map((row) => (
            <BookRow key={row.name} side="买" row={row} />
          ))}
          <div className="flex h-[29px] items-center border-t border-[#dcdde3] pl-[58px] text-[22px] text-[#777]">
            分时成交
            <svg width={10} height={6} viewBox="0 0 9 6" className="ml-[12px]">
              <path d="M4.500 0L9 6H0z" fill="#666" />
            </svg>
          </div>
          {trades.map((t, i) => (
            <div key={i} className="flex h-[31px] items-center pr-[6px] pl-[6px] text-[19.8px]">
              <span className="w-[69px] text-[#666]">{t.time}</span>
              <span className="w-[47px] text-[#00a000]">{t.price}</span>
              {t.arrow && (
                <svg width={13} height={16} viewBox="0 0 13 16" fill="none" strokeWidth={1.7} stroke={t.arrow === "up" ? RED : GREEN}>
                  <path d={t.arrow === "up" ? "M6.5 15.5V1.5M1 7L6.5 1.5L12 7" : "M6.5 .5V14.5M1 9L6.5 14.5L12 9"} />
                </svg>
              )}
              <span className={t.up ? "ml-auto text-[#fa2424]" : "ml-auto text-[#00a000]"}>{t.qty}</span>
            </div>
          ))}
        </div>
      </div>
      <BottomBook />
      <ActionBar />
    </div>
  );
}
